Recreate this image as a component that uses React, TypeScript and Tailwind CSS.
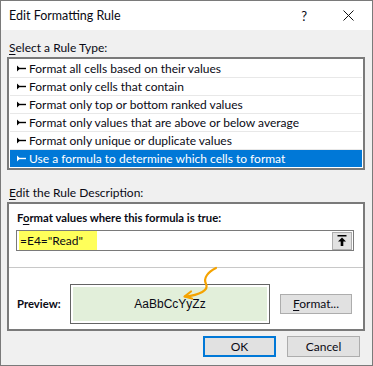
import React from "react";

const items = [
  "Format all cells based on their values",
  "Format only cells that contain",
  "Format only top or bottom ranked values",
  "Format only values that are above or below average",
  "Format only unique or duplicate values",
  "Use a formula to determine which cells to format",
];

function Bullet({ color }: { color: string }) {
  return (
    <svg width="9" height="7" viewBox="0 0 9 7" className="shrink-0">
      <path d="M0 0.5 L3 3.5 L0 6.5 Z" fill={color} />
      <rect x="0" y="2.8" width="9" height="1.4" fill={color} />
    </svg>
  );
}

export default function App() {
  return (
    <div
      className="relative w-[373px] h-[366px] border border-[#7a7a7a] bg-[#f0f0f0] flex flex-col text-[12px] text-[#0a0a14]"
      style={{ fontFamily: 'Lato, "Noto Sans", sans-serif' }}
    >
      {/* Title bar */}
      <div className="h-[29px] bg-white flex items-center pl-[8px] shrink-0">
        <span className="leading-[16px] text-[12.5px]">Edit Formatting Rule</span>
        <span className="ml-auto mr-[36px] leading-[16px] text-[13px]">?</span>
        <svg width="11" height="11" viewBox="0 0 11 11" className="mr-[18px]">
          <path d="M0.5 0.5 L10.5 10.5 M10.5 0.5 L0.5 10.5" stroke="#111" strokeWidth="1" />
        </svg>
      </div>

      {/* Body */}
      <div className="flex flex-col pl-[6px] pr-[7px] pt-[10px]">
        <div className="leading-[16px] pl-[2px]">
          <span className="underline underline-offset-2">S</span>elect a Rule Type:
        </div>
        <div className="mt-[1px] border-2 border-[#7a7a7a] bg-white p-[1px]">
          {items.map((t, i) => {
            const sel = i === items.length - 1;
            return (
              <div
                key={t}
                className={
                  sel
                    ? "h-[17px] flex items-center gap-[3px] pl-[7px] bg-[#0078d7] text-white"
                    : "h-[18px] flex items-center gap-[3px] pl-[7px] border-b border-[#e8e8e8]"
                }
              >
                <Bullet color={sel ? "#ffffff" : "#000000"} />
                <span className="leading-[16px]">{t}</span>
              </div>
            );
          })}
        </div>

        <div className="mt-[15px] leading-[16px] pl-[2px]">
          <span className="underline underline-offset-2">E</span>dit the Rule Description:
        </div>
        <div className="mt-[1px] h-[129px] border-2 border-[#7a7a7a] bg-white px-[7px] pt-[6px] flex flex-col">
          <div className="leading-[16px] font-bold text-[11.3px] pl-[1px]">
            F<span className="underline underline-offset-2">o</span>rmat values where this formula is true:
          </div>
          <div className="mt-[4px] h-[21px] w-[338px] border border-[#7a7a7a] bg-white flex items-center">
            <div className="h-full bg-[#ffff5a] ml-[2px] w-[78px] flex items-center">
              <span className="leading-[16px] pl-[1px]">=E4="Read"</span>
            </div>
            <div className="ml-auto mr-[1px] h-[18px] w-[20px] border border-[#adadad] bg-[#e1e1e1] flex items-center justify-center">
              <svg width="10" height="11" viewBox="0 0 10 11">
                <rect x="0.5" y="0" width="9" height="1.5" fill="#000" />
                <path d="M5 2.5 L9 6.5 L6.3 6.5 L6.3 11 L3.7 11 L3.7 6.5 L1 6.5 Z" fill="#000" />
              </svg>
            </div>
          </div>
          <div className="mt-[16px] -mx-[7px] h-px bg-[#c8c8c8]" />
          <div className="mt-[16px] flex items-center">
            <div className="w-[54px] pl-[1px] font-bold text-[11.3px] leading-[16px]">Preview:</div>
            <div className="w-[200px] h-[40px] border border-[#646464] p-[2px]">
              <div
                className="h-full bg-[#e2efda] flex items-center justify-center text-[12px]"
                style={{ fontFamily: '"Liberation Sans", sans-serif' }}
              >
                AaBbCcYyZz
              </div>
            </div>
            <div className="ml-[10px] w-[72px] h-[20px] border border-[#adadad] bg-[#e1e1e1] flex items-center justify-center leading-[16px]">
              <span>
                <span className="underline underline-offset-2">F</span>ormat...
              </span>
            </div>
          </div>
        </div>

        <div className="mt-[5px] flex justify-end gap-[11px] pr-[5px]">
          <div className="w-[73px] h-[21px] border-2 border-[#0078d7] bg-[#e1e1e1] flex items-center justify-center leading-[16px]">
            OK
          </div>
          <div className="w-[73px] h-[21px] border border-[#adadad] bg-[#e1e1e1] flex items-center justify-center leading-[16px]">
            Cancel
          </div>
        </div>
      </div>

      {/* Orange annotation arrow */}
      <svg
        className="absolute left-0 top-0 pointer-events-none"
        width="373"
        height="366"
        viewBox="-1 -1 373 366"
      >
        <path
          d="M214 266 C 206 270, 201 276, 204 282 C 207 288, 198 293, 183 294.5"
          fill="none"
          stroke="#f5a300"
          strokeWidth="2.2"
          strokeLinecap="round"
        />
        <path
          d="M189 289.5 L182.5 294.5 L190 296.5"
          fill="none"
          stroke="#f5a300"
          strokeWidth="2.2"
          strokeLinecap="round"
          strokeLinejoin="round"
        />
      </svg>
    </div>
  );
}
